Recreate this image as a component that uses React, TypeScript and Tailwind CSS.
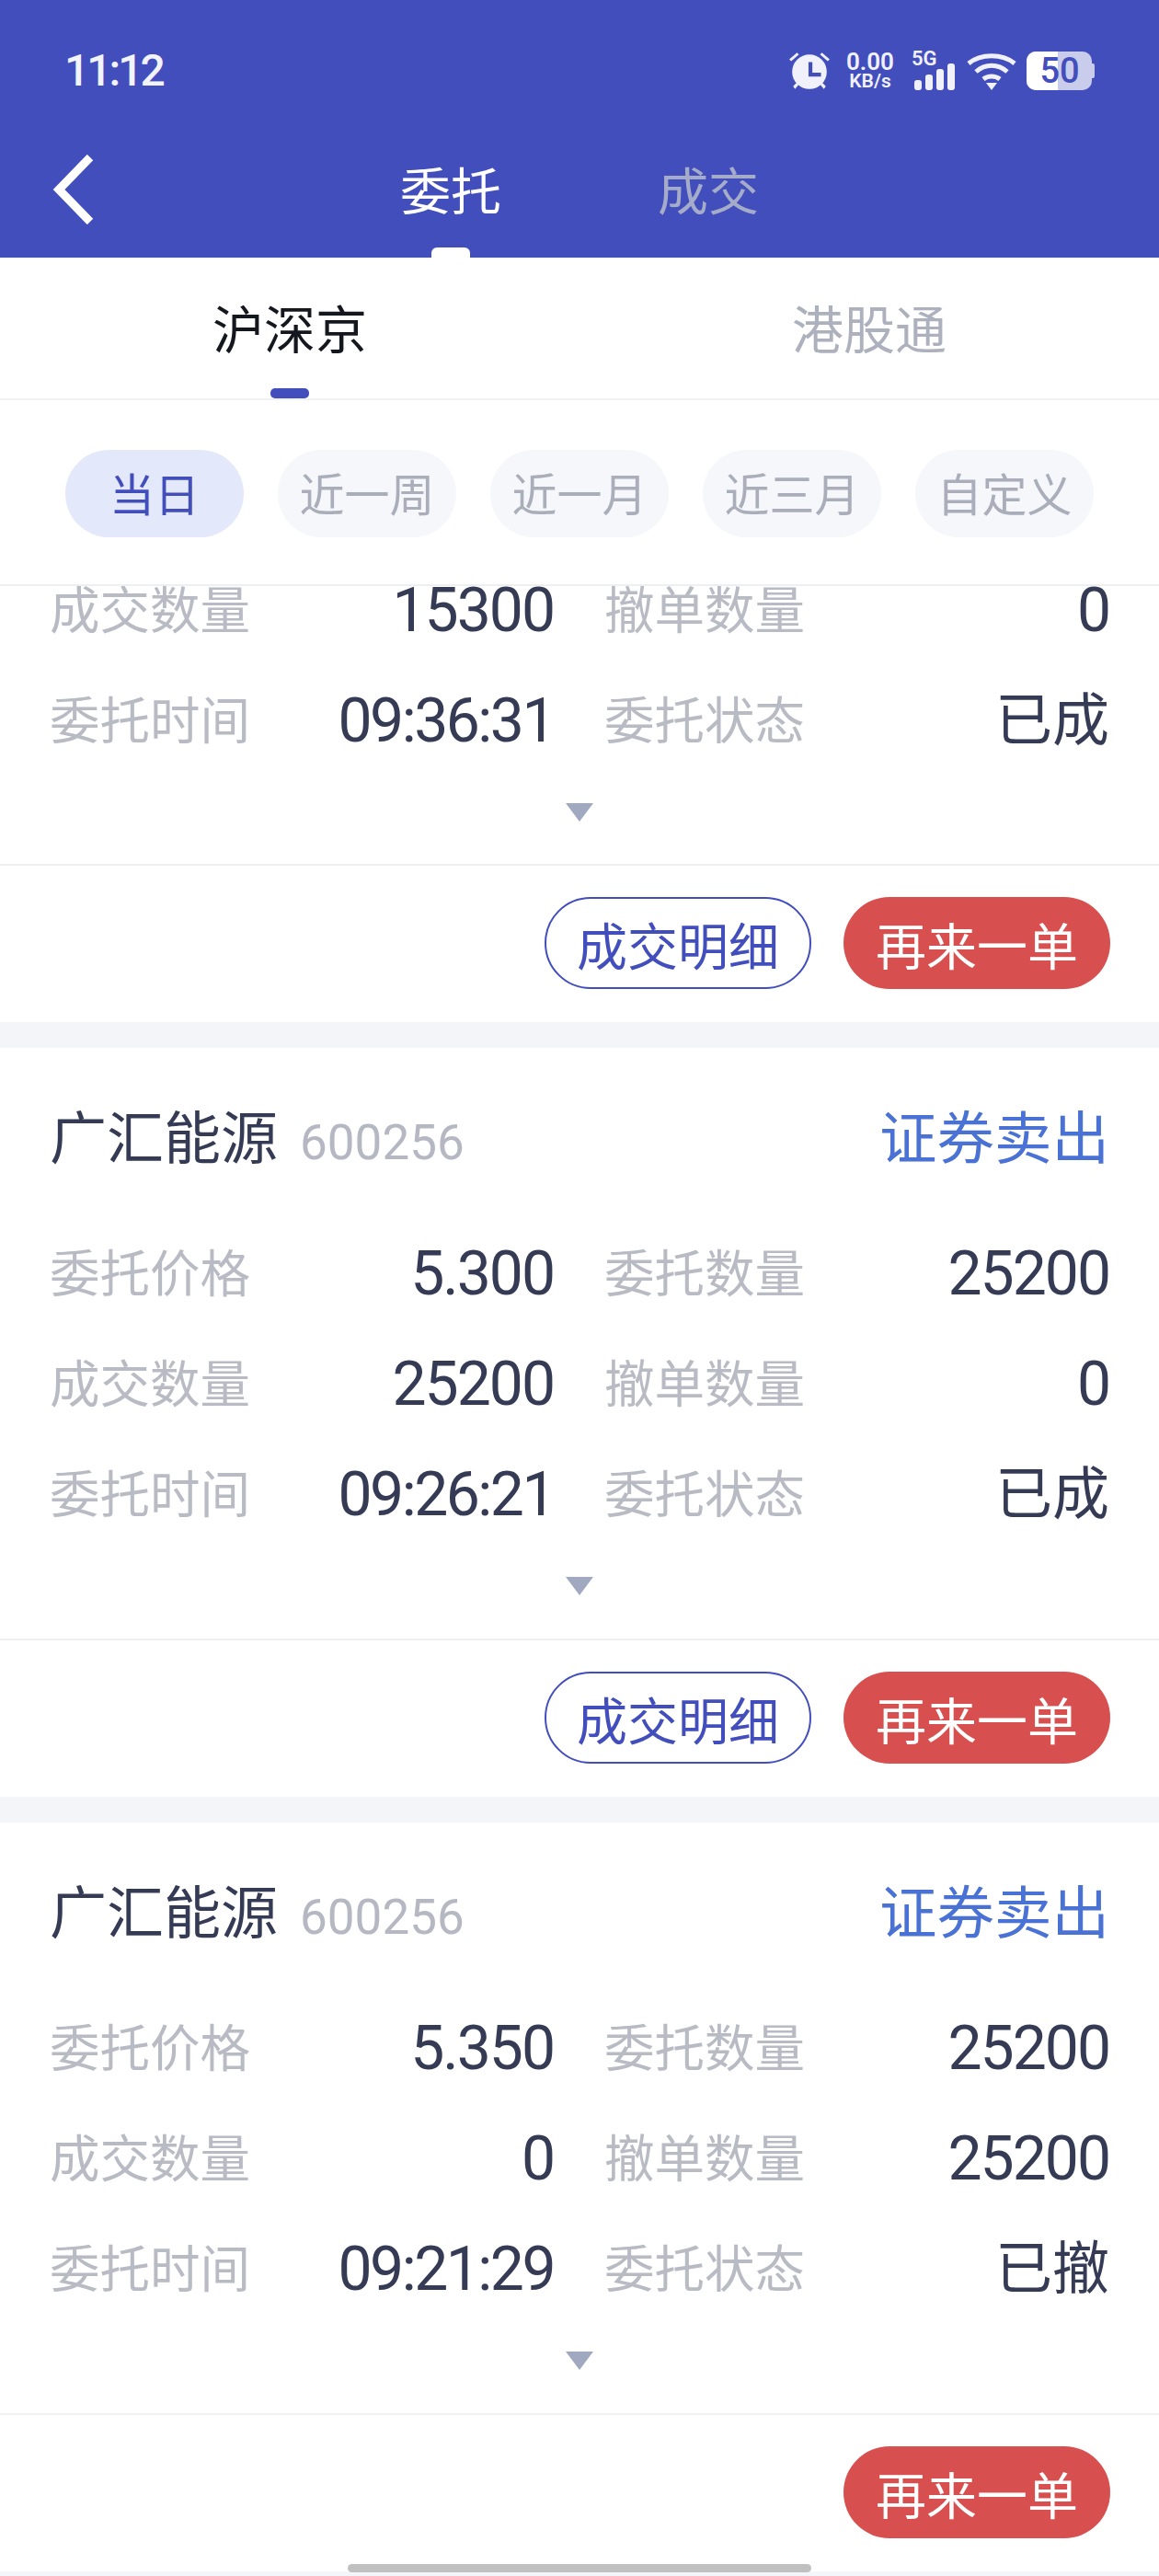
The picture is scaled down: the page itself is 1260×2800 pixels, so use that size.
const cjk = "font-['Roboto','Noto_Sans_CJK_SC',sans-serif]";

function Value({ v }: { v: string }) {
  const isNumber = /^[\d.]+$/.test(v);
  const isTime = v.includes(":");
  return (
    <span
      className={
        isTime
          ? "text-[66px] leading-[48px] tracking-[-2.5px] text-[#353b55]"
          : isNumber
            ? "text-[66px] leading-[48px] tracking-[-2px] text-[#353b55]"
            : "text-[62px] leading-[48px] text-[#353b55]"
      }
    >
      {v}
    </span>
  );
}

function Row({ a, b, c, d }: { a: string; b: string; c: string; d: string }) {
  return (
    <div className="flex h-[120px] items-center pl-[54px] pr-[54px] pt-[3px]">
      <div className="flex w-[548px] items-center justify-between">
        <span className="text-[54.5px] leading-[50px] text-[#b9bbc4]">{a}</span>
        <Value v={b} />
      </div>
      <div className="ml-[55px] flex flex-1 items-center justify-between">
        <span className="text-[54.5px] leading-[50px] text-[#b9bbc4]">{c}</span>
        <Value v={d} />
      </div>
    </div>
  );
}

function Arrow() {
  return (
    <div className="flex h-[97px] justify-center pt-[30px]">
      <svg width="32" height="22" viewBox="0 0 32 22">
        <path d="M1 1h30L16 21z" fill="#a0a9bf" />
      </svg>
    </div>
  );
}

function Actions({ detail = true }: { detail?: boolean }) {
  return (
    <div className="flex h-[172px] items-start justify-end gap-[35px] border-t-2 border-[#eeeff2] pr-[53px] pt-[34px]">
      {detail && (
        <div className="flex h-[100px] w-[290px] items-center justify-center rounded-[50px] border-2 border-[#434ebd] pt-[10px] text-[55px] leading-none text-[#434ebd]">
          成交明细
        </div>
      )}
      <div className="flex h-[100px] w-[290px] items-center justify-center rounded-[50px] bg-[#d84f4f] pt-[10px] text-[55px] leading-none text-white">
        再来一单
      </div>
    </div>
  );
}

function Card({ price, dealt, cancel, time, status }: { price: string; dealt: string; cancel: string; time: string; status: string }) {
  return (
    <div className="bg-white">
      <div className="flex h-[184px] items-center justify-between pb-[4px] pl-[54px] pr-[54px] pt-[20px]">
        <div className="flex items-baseline gap-[24px]">
          <span className="text-[62px] leading-none text-[#353b55]">广汇能源</span>
          <span className="text-[53px] leading-none text-[#b5b8c2]">600256</span>
        </div>
        <span className="text-[62.5px] leading-none text-[#4a72d4]">证券卖出</span>
      </div>
      <Row a="委托价格" b={price} c="委托数量" d="25200" />
      <Row a="成交数量" b={dealt} c="撤单数量" d={cancel} />
      <Row a="委托时间" b={time} c="委托状态" d={status} />
      <Arrow />
      <div className="h-[1px]" />
    </div>
  );
}

export default function App() {
  const pills = ["当日", "近一周", "近一月", "近三月", "自定义"];
  return (
    <div className={`flex h-[2800px] w-[1260px] flex-col overflow-hidden bg-white ${cjk}`}>
      <div className="h-[280px] shrink-0 bg-[#434ebd]">
        <div className="flex h-[140px] items-center justify-between pl-[70px] pr-[70px] pt-[14px]">
          <span className="text-[48px] font-medium leading-none tracking-[-3px] text-[#f2f3fb]">11:12</span>
          <div className="flex items-center text-[#f0f1fb]">
            <svg width="46" height="44" viewBox="0 0 44 42" fill="#f0f1fb">
              <circle cx="22" cy="22" r="18" />
              <path d="M21 12h4v11h9v4H21z" fill="#434ebd" />
              <path d="M1 9l8-7 2 2-8 7zM43 9l-8-7-2 2 8 7zM5 37l5-5 2 2-5 6zM39 37l-5-5-2 2 5 6z" />
            </svg>
            <div className="ml-[16px] flex w-[54px] flex-col items-center font-semibold leading-none">
              <span className="text-[26px] leading-[22px]">0.00</span>
              <span className="text-[21px] leading-[20px]">KB/s</span>
            </div>
            <div className="relative ml-[18px] h-[42px] w-[50px]">
              <span className="absolute left-0 top-[-3px] text-[22px] font-semibold leading-none">5G</span>
              <svg className="absolute left-0 top-0" width="50" height="42" viewBox="0 0 50 42" fill="#f0f1fb">
                <rect x="3" y="31" width="8" height="11" rx="3" />
                <rect x="15" y="25" width="8" height="17" rx="3" />
                <rect x="27" y="19" width="8" height="23" rx="3" />
                <rect x="39" y="13" width="8" height="29" rx="3" />
              </svg>
            </div>
            <svg className="ml-[10px]" width="54" height="42" viewBox="0 0 54 42" fill="none" stroke="#f0f1fb" strokeWidth="5">
              <path d="M2 13C15 2 39 2 52 13" />
              <path d="M10 22C20 13 34 13 44 22" />
              <path d="M18 30C23 26 31 26 36 30" />
              <path d="M21 34h12l-6 8z" fill="#f0f1fb" stroke="none" />
            </svg>
            <div className="relative ml-[11px] flex h-[42px] w-[71px] items-center overflow-hidden rounded-[10px] bg-[#c9cceb]">
              <div className="h-full w-[34px] bg-white" />
              <span className="absolute inset-0 flex items-center justify-center pl-[1px] text-[38px] font-medium leading-none text-[#434ebd]">50</span>
            </div>
            <div className="h-[16px] w-[3px] rounded-r-[2px] bg-[#c9cceb]" />
          </div>
        </div>
        <div className="relative flex h-[140px] items-start">
          <svg className="absolute left-[56px] top-[28px]" width="46" height="76" viewBox="0 0 46 76" fill="none" stroke="#fff" strokeWidth="9">
            <path d="M42 3L8 38l34 35" />
          </svg>
          <div className="ml-[435px] mt-[41px] flex gap-[170px] text-[55px] leading-[56px]">
            <span className="text-white">委托</span>
            <span className="text-[#a5acc9]">成交</span>
          </div>
          <div className="absolute bottom-0 left-[469px] h-[11px] w-[42px] rounded-t-[6px] bg-white" />
        </div>
      </div>

      <div className="relative grid h-[155px] shrink-0 grid-cols-2 border-b-2 border-[#f0f1f4]">
        <div className="flex items-center justify-center pt-[6px] text-[56px] leading-none text-[#15171f]">沪深京</div>
        <div className="flex items-center justify-center pt-[6px] text-[56px] leading-none text-[#acb1bd]">港股通</div>
        <div className="absolute bottom-0 left-[294px] h-[11px] w-[42px] rounded-[5px] bg-[#434ebd]" />
      </div>

      <div className="flex h-[202px] shrink-0 gap-[37px] border-b-2 border-[#eeeff2] pl-[71px] pt-[54px]">
        {pills.map((p, i) => (
          <div
            key={p}
            className={
              i === 0
                ? "flex h-[95px] w-[194px] items-center justify-center rounded-[48px] bg-[#e3e8fa] pt-[5px] text-[49px] leading-none text-[#434ebd]"
                : "flex h-[95px] w-[194px] items-center justify-center rounded-[48px] bg-[#f6f7fb] pt-[5px] text-[49px] leading-none text-[#a9aeba]"
            }
          >
            {p}
          </div>
        ))}
      </div>

      <div className="min-h-0 flex-1 overflow-hidden">
        <div className="mt-[-35px] bg-white">
          <Row a="成交数量" b="15300" c="撤单数量" d="0" />
          <Row a="委托时间" b="09:36:31" c="委托状态" d="已成" />
          <Arrow />
        </div>
        <Actions />
        <div className="h-[28px] bg-[#f4f5f8]" />
        <Card price="5.300" dealt="25200" cancel="0" time="09:26:21" status="已成" />
        <Actions />
        <div className="h-[28px] bg-[#f4f5f8]" />
        <Card price="5.350" dealt="0" cancel="25200" time="09:21:29" status="已撤" />
        <Actions detail={false} />
        <div className="h-[28px] bg-[#f4f5f8]" />
      </div>
      <div className="pointer-events-none absolute left-[378px] top-[2787px] h-[9px] w-[504px] rounded-[5px] bg-[#c0c0c0]" />
    </div>
  );
}
